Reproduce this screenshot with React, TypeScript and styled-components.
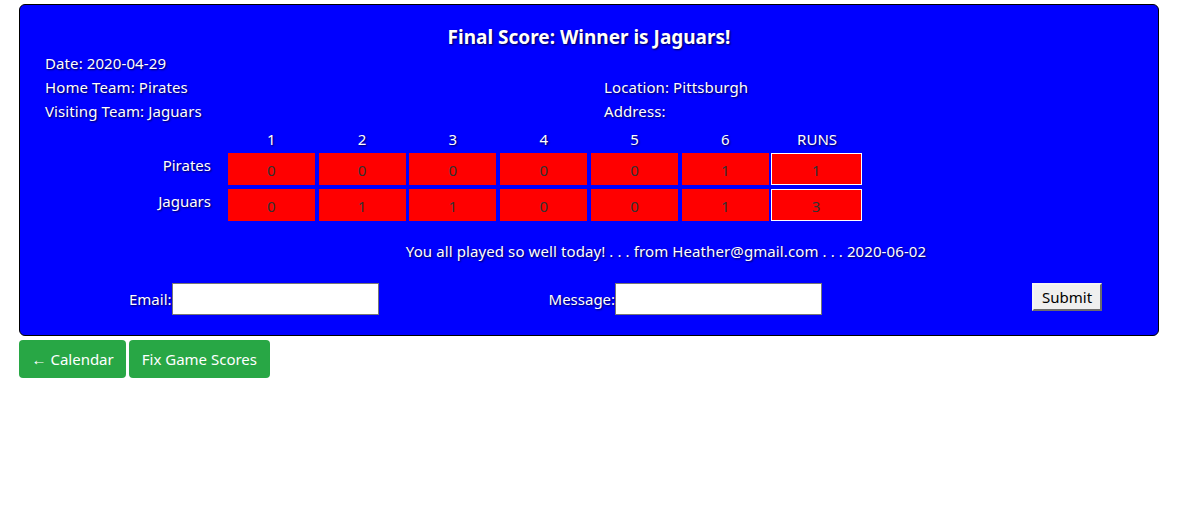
import React from "react";
import styled, { createGlobalStyle } from "styled-components";

const Global = createGlobalStyle`
  html, body { margin: 0; padding: 0; background: #fff; }
  body { font-family: "Noto Sans", "Open Sans", sans-serif; font-size: 15px; }
`;

const Page = styled.div`
  padding: 4px 0 0 19px;
  width: 1140px;
`;

const Card = styled.div`
  background: #0000ff;
  border: 1px solid #000;
  border-radius: 6px;
  box-sizing: border-box;
  width: 1140px;
  height: 332px;
  padding: 19px 0 0 0;
  color: #fff;
  text-shadow: 1px 1px 2px rgba(0, 0, 0, 0.7);
`;

const Title = styled.h1`
  margin: 0;
  text-align: center;
  font-size: 19px;
  font-weight: 700;
  line-height: 26px;
`;

const Info = styled.div`
  display: grid;
  grid-template-columns: 559px 559px;
  padding-left: 25px;
  line-height: 24px;
  margin-top: 1px;
  letter-spacing: 0.1px;
`;

const Board = styled.div`
  display: grid;
  grid-template-columns: 94px repeat(6, 87px) 89px;
  grid-template-rows: 20px 32px 32px;
  column-gap: 3.8px;
  row-gap: 4px;
  margin: 6px 0 0 110px;
`;

const Head = styled.div`
  text-align: center;
  line-height: 20px;
`;

const Team = styled.div`
  text-align: right;
  padding-right: 13px;
  line-height: 24px;
`;

const Cell = styled.div<{ $total?: boolean }>`
  background: #ff0000;
  color: #333;
  text-shadow: none;
  box-sizing: border-box;
  border: ${(p) => (p.$total ? "1px solid #fff" : "none")};
  margin-left: ${(p) => (p.$total ? "-2px" : "0")};
  width: ${(p) => (p.$total ? "91px" : "auto")};
  display: flex;
  align-items: center;
  justify-content: center;
  padding-top: 2px;
`;

const Comment = styled.div`
  margin: 18px 0 0 154px;
  text-align: center;
  line-height: 24px;
  letter-spacing: 0.1px;
`;

const Form = styled.form`
  display: flex;
  align-items: flex-start;
  margin: 20px 0 0 109px;
`;

const Label = styled.label<{ $gap?: number }>`
  display: flex;
  align-items: center;
  height: 32px;
  margin-left: ${(p) => p.$gap ?? 0}px;
`;

const Input = styled.input`
  box-sizing: border-box;
  width: 207px;
  height: 32px;
  border: 1px solid #767676;
  background: #fff;
  margin: 0;
  padding: 2px 4px;
`;

const Submit = styled.button`
  box-sizing: border-box;
  height: 28px;
  width: 70px;
  margin-left: 210px;
  background: #efefef;
  border: 2px outset #c0c0c0;
  border-top-color: #f4f4f4;
  border-left-color: #f4f4f4;
  color: #000;
  font-family: "Noto Sans", sans-serif;
  font-size: 15px;
  padding: 0;
  text-shadow: none;
`;

const Buttons = styled.div`
  display: flex;
  gap: 3px;
  margin-top: 4px;
`;

const Green = styled.button`
  background: #28a745;
  color: #fff;
  border: none;
  border-radius: 4px;
  height: 38px;
  padding: 0 12.5px;
  font-family: "Noto Sans", sans-serif;
  font-size: 15px;
`;

const innings = ["1", "2", "3", "4", "5", "6"];
const rows = [
  { team: "Pirates", scores: [0, 0, 0, 0, 0, 1], runs: 1 },
  { team: "Jaguars", scores: [0, 1, 1, 0, 0, 1], runs: 3 },
];

export default function App() {
  return (
    <>
      <Global />
      <Page>
        <Card>
          <Title>Final Score: Winner is Jaguars!</Title>
          <Info>
            <div>Date: 2020-04-29</div>
            <div />
            <div>Home Team: Pirates</div>
            <div>Location: Pittsburgh</div>
            <div>Visiting Team: Jaguars</div>
            <div>Address:</div>
          </Info>
          <Board>
            <div />
            {innings.map((i) => (
              <Head key={i}>{i}</Head>
            ))}
            <Head>RUNS</Head>
            {rows.map((r) => (
              <React.Fragment key={r.team}>
                <Team>{r.team}</Team>
                {r.scores.map((s, idx) => (
                  <Cell key={idx}>{s}</Cell>
                ))}
                <Cell $total>{r.runs}</Cell>
              </React.Fragment>
            ))}
          </Board>
          <Comment>
            You all played so well today! . . . from Heather@gmail.com . . . 2020-06-02
          </Comment>
          <Form onSubmit={(e) => e.preventDefault()}>
            <Label>
              Email:<Input type="text" />
            </Label>
            <Label $gap={170}>
              Message:<Input type="text" />
            </Label>
            <Submit type="submit">Submit</Submit>
          </Form>
        </Card>
        <Buttons>
          <Green>← Calendar</Green>
          <Green>Fix Game Scores</Green>
        </Buttons>
      </Page>
    </>
  );
}
